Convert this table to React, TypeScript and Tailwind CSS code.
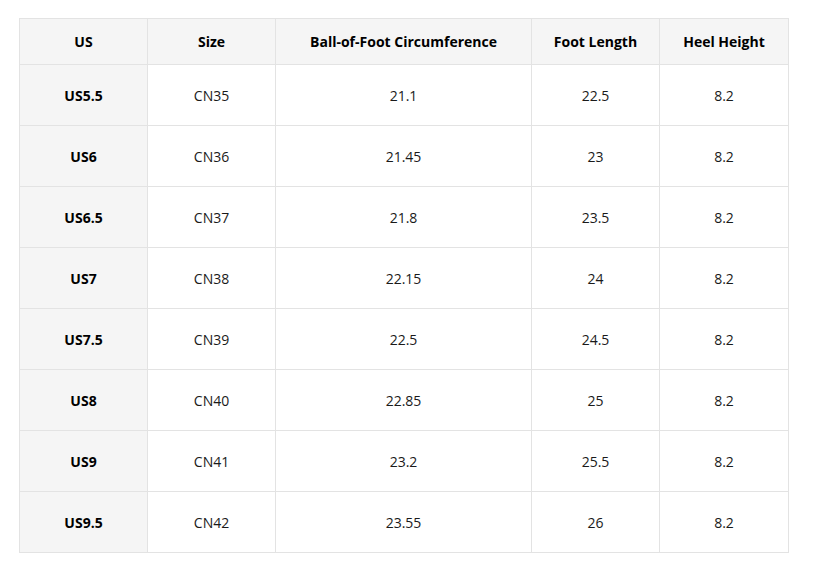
import React from "react";

const rows = [
  ["US5.5", "CN35", "21.1", "22.5", "8.2"],
  ["US6", "CN36", "21.45", "23", "8.2"],
  ["US6.5", "CN37", "21.8", "23.5", "8.2"],
  ["US7", "CN38", "22.15", "24", "8.2"],
  ["US7.5", "CN39", "22.5", "24.5", "8.2"],
  ["US8", "CN40", "22.85", "25", "8.2"],
  ["US9", "CN41", "23.2", "25.5", "8.2"],
  ["US9.5", "CN42", "23.55", "26", "8.2"],
];

const headers = ["US", "Size", "Ball-of-Foot Circumference", "Foot Length", "Heel Height"];

export default function App() {
  return (
    <div className="w-[820px] h-[577px] bg-white pt-[18px] pl-[19px]" style={{ fontFamily: '"Open Sans", "Noto Sans", sans-serif' }}>
      <table className="table-fixed border-collapse w-[769px] text-[14px] text-[#1a1a1a]">
        <colgroup>
          <col className="w-[128px]" />
          <col className="w-[128px]" />
          <col className="w-[256px]" />
          <col className="w-[128px]" />
          <col className="w-[129px]" />
        </colgroup>
        <thead>
          <tr className="h-[46px] bg-[#f5f5f5]">
            {headers.map((h) => (
              <th key={h} className="border border-[#e3e3e3] font-bold text-black text-center p-0">
                {h}
              </th>
            ))}
          </tr>
        </thead>
        <tbody>
          {rows.map((r) => (
            <tr key={r[0]} className="h-[61px]">
              {r.map((c, i) => (
                <td
                  key={i}
                  className={
                    i === 0
                      ? "border border-[#e3e3e3] bg-[#f5f5f5] font-bold text-black text-center p-0"
                      : "border border-[#e3e3e3] text-center p-0"
                  }
                >
                  {c}
                </td>
              ))}
            </tr>
          ))}
        </tbody>
      </table>
    </div>
  );
}
